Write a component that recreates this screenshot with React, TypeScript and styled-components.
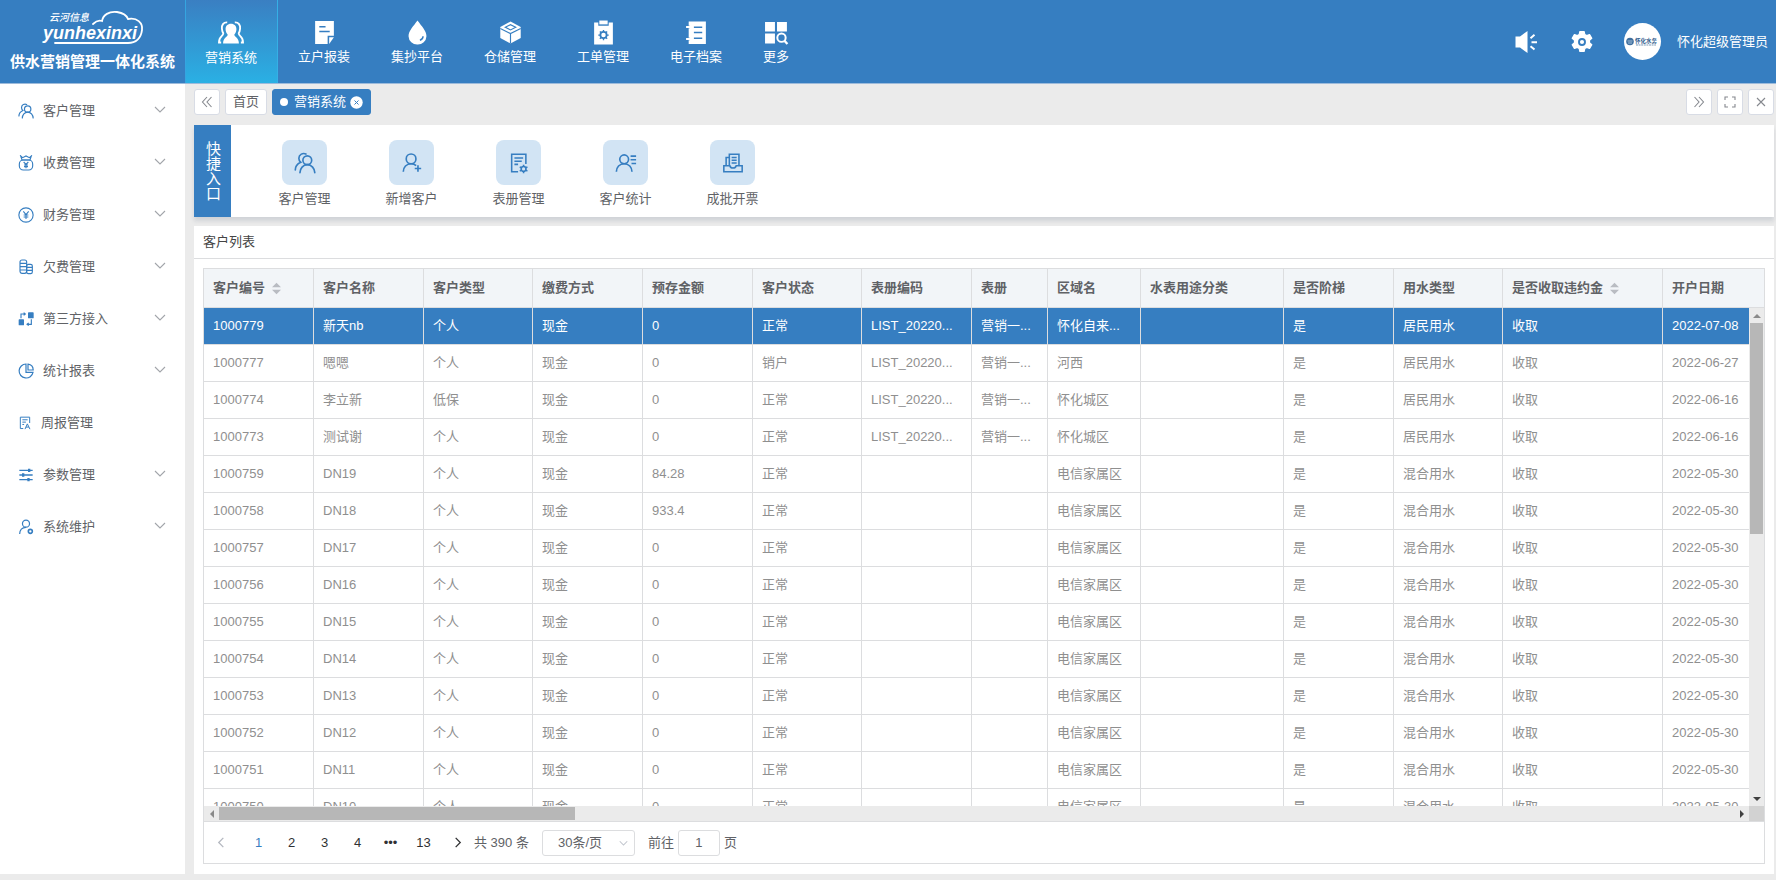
import React, { useState } from "react";
import styled, { createGlobalStyle, css } from "styled-components";

const blue = "#367ec1";
const line = "#dcdddf";
const grey = "#ebebeb";

const GlobalStyle = createGlobalStyle`
  *, *::before, *::after { box-sizing: border-box; }
  body {
    margin: 0;
    background: ${grey};
    color: #606266;
    font: 13px/20px "Liberation Sans", "Noto Sans CJK SC", sans-serif;
  }
  button, input, select { font: inherit; color: inherit; margin: 0; padding: 0; }
  button { cursor: pointer; border: 0; background: none; }
  a { color: inherit; text-decoration: none; }
  ul { list-style: none; margin: 0; padding: 0; }
`;

const Page = styled.div`
  display: flex;
  flex-direction: column;
  height: 100vh;
  min-height: 600px;
`;

/* ---------- header ---------- */
const Header = styled.header`
  display: flex;
  flex: none;
  height: 84px;
  background: ${blue};
  border-bottom: 1px solid #9dbbdb;
  color: #fff;
`;
const Brand = styled.div`
  display: flex;
  flex-direction: column;
  align-items: center;
  gap: 6px;
  width: 185px;
  padding-top: 8px;
`;
const BrandTitle = styled.h1`
  margin: 0;
  font-size: 15px;
  line-height: 20px;
  font-weight: 700;
  white-space: nowrap;
`;
const TopNav = styled.nav`
  display: flex;
`;
const TopLink = styled.a<{ $active?: boolean }>`
  display: flex;
  flex-direction: column;
  align-items: center;
  gap: 2px;
  padding: 20px 20px 0;
  border-right: 1px solid transparent;
  white-space: nowrap;
  ${(p) =>
    p.$active &&
    css`
      background: linear-gradient(#3a7fc2, #2ab0e4);
      border-color: #35b0e6;
      box-shadow: inset 1px 0 #35a5e0;
    `}
`;
const HeaderTools = styled.div`
  display: flex;
  align-items: center;
  margin-left: auto;
  padding-right: 8px;
`;
const ToolButton = styled.button`
  display: flex;
  justify-content: center;
  width: 56px;
  color: #fff;
`;
const UserButton = styled.button`
  display: flex;
  align-items: center;
  gap: 16px;
  margin-left: 14px;
  color: #fff;
  white-space: nowrap;
`;
const Avatar = styled.span`
  display: flex;
  align-items: center;
  justify-content: center;
  width: 37px;
  height: 37px;
  border-radius: 50%;
  background: #fff;
`;

/* ---------- body ---------- */
const Body = styled.div`
  display: flex;
  flex: 1;
  min-height: 0;
  padding-bottom: 6px;
`;
const Sidebar = styled.nav`
  flex: none;
  width: 185px;
  padding-top: 1px;
  background: #fff;
`;
const MenuButton = styled.button`
  display: flex;
  align-items: center;
  width: 100%;
  height: 52px;
  padding: 0 19px 0 18px;
  text-align: left;
`;
const MenuIcon = styled.span<{ $narrow?: boolean }>`
  display: flex;
  width: ${(p) => (p.$narrow ? 23 : 25)}px;
  color: ${blue};
`;
const MenuArrow = styled.span`
  display: flex;
  margin-left: auto;
  padding-bottom: 3px;
  color: #a2a5aa;
`;
const Main = styled.main`
  display: flex;
  flex: 1;
  flex-direction: column;
  min-width: 0;
  padding: 0 2px 0 9px;
`;

const TabBar = styled.div`
  display: flex;
  flex: none;
  gap: 5px;
  height: 41px;
  padding-top: 5px;
`;
const Tab = styled.button<{ $active?: boolean; $square?: boolean }>`
  display: flex;
  align-items: center;
  justify-content: center;
  gap: 4px;
  height: 26px;
  width: ${(p) => (p.$square ? "26px" : "auto")};
  padding: 0 ${(p) => (p.$square ? 0 : 7)}px;
  border: 1px solid ${(p) => (p.$active ? blue : "#d8dce5")};
  border-radius: 3px;
  background: ${(p) => (p.$active ? blue : "#fff")};
  color: ${(p) => (p.$active ? "#fff" : "#606266")};
  white-space: nowrap;
`;
const Dot = styled.span`
  width: 8px;
  height: 8px;
  margin-right: 2px;
  border-radius: 50%;
  background: #fff;
`;
const Spacer = styled.span`
  flex: 1;
`;

const QuickPanel = styled.section`
  display: flex;
  flex: none;
  height: 92px;
  margin-bottom: 9px;
  background: #fff;
  box-shadow: 0 4px 4px rgba(60, 80, 110, 0.15);
`;
const QuickTitle = styled.h2`
  display: flex;
  align-items: center;
  width: 37px;
  margin: 0 20px 0 0;
  padding: 0 10px 0 12px;
  background: ${blue};
  color: #fff;
  font-size: 15px;
  line-height: 15px;
  font-weight: 400;
  word-break: break-all;
`;
const QuickLink = styled.a`
  display: flex;
  flex-direction: column;
  align-items: center;
  gap: 4px;
  width: 107px;
  padding-top: 15px;
`;
const Tile = styled.span`
  display: flex;
  align-items: center;
  justify-content: center;
  width: 45px;
  height: 45px;
  border-radius: 8px;
  background: #d2e4f4;
  color: ${blue};
`;

const ListPanel = styled.section`
  display: flex;
  flex: 1;
  flex-direction: column;
  min-height: 0;
  background: #fff;
`;
const ListTitle = styled.h2`
  flex: none;
  height: 33px;
  margin: 0;
  padding: 0 9px;
  border-bottom: 1px solid ${line};
  color: #444;
  font-size: 13px;
  line-height: 32px;
  font-weight: 400;
`;
const TableBox = styled.div`
  display: flex;
  flex: 1;
  flex-direction: column;
  min-height: 0;
  margin: 9px 9px 10px;
  border: 1px solid ${line};
`;
const TableArea = styled.div`
  display: grid;
  flex: 1;
  grid-template-columns: minmax(0, 1fr) 15px;
  grid-template-rows: minmax(0, 1fr) 15px;
  min-height: 0;
  border-bottom: 1px solid ${line};
`;
const TableView = styled.div`
  overflow: hidden;
`;
const Table = styled.table`
  width: 100%;
  table-layout: fixed;
  border-collapse: separate;
  border-spacing: 0;
`;
const Th = styled.th`
  height: 39px;
  padding: 0 9px;
  border-right: 1px solid ${line};
  border-bottom: 1px solid ${line};
  background: #f2f5f8;
  color: #606266;
  font-weight: 700;
  text-align: left;
  white-space: nowrap;
  &:last-child { border-right: 0; }
`;
const HeadLabel = styled.span`
  display: flex;
  align-items: center;
  gap: 7px;
`;
const SortButton = styled.button`
  display: flex;
  color: #b9bcc2;
`;
const Td = styled.td`
  height: 37px;
  padding: 0 0 0 9px;
  border-right: 1px solid ${line};
  border-bottom: 1px solid ${line};
  overflow: hidden;
  white-space: nowrap;
  &:last-child { border-right: 0; }
`;
const Row = styled.tr<{ $selected?: boolean }>`
  color: ${(p) => (p.$selected ? "#fff" : "#8f8f8f")};
  background: ${(p) => (p.$selected ? blue : "#fff")};
`;
const VScroll = styled.div`
  display: flex;
  flex-direction: column;
  min-height: 0;
  background: ${grey};
`;
const VHead = styled.div`
  height: 39px;
  border-bottom: 1px solid ${line};
  background: #f2f5f8;
`;
const HScroll = styled.div`
  display: flex;
  background: ${grey};
`;
const ScrollArrow = styled.span<{ $dim?: boolean }>`
  display: flex;
  flex: none;
  align-items: center;
  justify-content: center;
  width: 15px;
  height: 15px;
  color: ${(p) => (p.$dim ? "#8a8a8a" : "#404040")};
`;
const VTrack = styled.div`
  flex: 1;
  padding: 0 1px;
`;
const VThumb = styled.div`
  height: 45%;
  background: #b7b7b7;
`;
const HTrack = styled.div`
  flex: 1;
  padding: 1px 0;
`;
const HThumb = styled.div`
  width: 23.5%;
  height: 100%;
  background: #b7b7b7;
`;
const Corner = styled.div`
  background: #d2d2d2;
`;

const Pager = styled.nav`
  display: flex;
  flex: none;
  align-items: center;
  height: 41px;
  color: #606266;
  white-space: nowrap;
`;
const PagerArrow = styled.button<{ $dim?: boolean }>`
  display: flex;
  justify-content: center;
  width: 34px;
  color: ${(p) => (p.$dim ? "#b4b8c0" : "#303133")};
`;
const PageList = styled.ul`
  display: flex;
  margin-left: 4px;
`;
const PageButton = styled.button<{ $active?: boolean }>`
  width: 33px;
  color: ${(p) => (p.$active ? blue : "#303133")};
  text-align: center;
`;
const SizeBox = styled.label`
  position: relative;
  display: flex;
  margin: 0 13px;
`;
const SizeSelect = styled.select`
  appearance: none;
  width: 93px;
  height: 26px;
  padding: 0 28px 0 15px;
  border: 1px solid ${line};
  border-radius: 3px;
  background: #fff;
`;
const SizeArrow = styled.span`
  position: absolute;
  top: 9px;
  right: 7px;
  display: flex;
  color: #c0c4cc;
  pointer-events: none;
`;
const JumpLabel = styled.label`
  display: flex;
  align-items: center;
  gap: 4px;
`;
const JumpInput = styled.input`
  width: 42px;
  height: 26px;
  border: 1px solid ${line};
  border-radius: 3px;
  background: #fff;
  text-align: center;
`;

/* ---------- icons ---------- */
const Svg = ({ s = 25, box = 24, children }: { s?: number; box?: number; children: React.ReactNode }) => (
  <svg width={s} height={s} viewBox={`0 0 ${box} ${box}`} fill="none" stroke="currentColor" aria-hidden="true">
    {children}
  </svg>
);

const Chevron = ({ w = 10, dir = "down", weight = 1.4 }: { w?: number; dir?: "down" | "left" | "right"; weight?: number }) => {
  const d = { down: "M1 3l5 5 5-5", left: "M8 1L3 6l5 5", right: "M4 1l5 5-5 5" }[dir];
  return (
    <svg width={w} height={w} viewBox="0 0 12 12" fill="none" stroke="currentColor" strokeWidth={weight} aria-hidden="true">
      <path d={d} />
    </svg>
  );
};

const Triangle = ({ d }: { d: string }) => (
  <svg width="8" height="8" viewBox="0 0 8 8" fill="currentColor" aria-hidden="true">
    <path d={d} />
  </svg>
);

const SortIcon = () => (
  <svg width="9" height="13" viewBox="0 0 10 13" fill="currentColor" aria-hidden="true">
    <path d="M5 0l5 5H0zM5 13L0 8h10z" />
  </svg>
);

const Logo = () => (
  <svg width="106" height="38" viewBox="40 8 106 38" fill="none" stroke="none" role="img" aria-label="yunhexinxi">
    <path
      d="M93 24c3-3 6-4 9-3 1-6 7-10 15-9 6 1 10 4 11 7 9-2 15 4 14 11-1 8-6 13-14 13H55"
      stroke="#fff"
      strokeWidth="1.8"
      strokeLinecap="round"
    />
    <text x="49" y="21" fontSize="10" fontStyle="italic" fontWeight="500" fill="#fff" fontFamily="'Noto Sans CJK SC', sans-serif">
      云河信息
    </text>
    <text x="43" y="39" fontSize="18" fontStyle="italic" fontWeight="700" fill="#fff" fontFamily="'Liberation Sans', sans-serif">
      yunhexinxi
    </text>
  </svg>
);

const gearPath =
  "M9.8 1.5h4.4l.6 3 1.9 1.1 2.9-1 2.2 3.8-2.3 2v2.2l2.3 2-2.2 3.8-2.9-1-1.9 1.1-.6 3H9.8l-.6-3-1.9-1.1-2.9 1-2.2-3.8 2.3-2v-2.2l-2.3-2 2.2-3.8 2.9 1 1.9-1.1z";

const SolidUsers = () => (
  <Svg s={26}>
    <path
      d="M8.500 2.200C5 2 3.200 4.600 3.600 8c.2 2.200.6 3.200 1.300 4.300C4.800 15.500.9 14.500.9 20.800h2M15.500 2.200c3.500-.2 5.300 2.400 4.900 5.800-.2 2.200-.6 3.200-1.300 4.300.1 3.200 4 2.200 4 8.500h-2"
      strokeWidth="1.700"
    />
    <path
      d="M12 3.400c3.200 0 5 2.100 5 5 0 2.200-.8 4-2 5.300.3 2.200 4.300 2.500 4.300 8H4.700c0-5.500 4-5.800 4.300-8C7.800 12.400 7 10.600 7 8.400c0-2.900 1.800-5 5-5z"
      fill="currentColor"
      stroke="none"
    />
  </Svg>
);
const SolidNote = () => (
  <Svg>
    <path d="M3 1h18v14h-6v8H3z" fill="currentColor" stroke="none" />
    <path d="M21 16.500L16.500 23v-6.500z" fill="currentColor" stroke="none" />
    <path d="M7 6.500h6M7 11h10" stroke={blue} strokeWidth="1.400" />
  </Svg>
);
const SolidDrop = () => (
  <Svg>
    <path d="M12 .5c4 5.500 8.600 10 8.600 15A8.300 8.300 0 0 1 12 23.500 8.300 8.300 0 0 1 3.400 15.500C3.400 10.500 8 6 12 .5z" fill="currentColor" stroke="none" />
    <path d="M17.300 15.500c0 2-1.300 3.400-3 3.900" stroke={blue} strokeWidth="1.400" />
  </Svg>
);
const SolidBox = () => (
  <Svg>
    <path d="M12 1.500l9.800 5.200v10.600L12 22.500l-9.800-5.200V6.700z" fill="currentColor" stroke="none" />
    <path d="M2.200 8.200L12 13l9.800-4.800M12 13v9.500M7 7l5-2.500L17 7l-5 2.500z" stroke={blue} strokeWidth="1.100" />
  </Svg>
);
const SolidClipboard = () => (
  <Svg>
    <path d="M3 2.500h4V5.500h10v-3h4V23.500H3z" fill="currentColor" stroke="none" />
    <path d="M8 .5h8v3.700H8z" fill="currentColor" stroke="none" />
    <circle cx="12" cy="14.500" r="3" stroke={blue} strokeWidth="1.700" />
    <path d="M12 9.500v2M12 17.500v2M7 14.500h2M15 14.500h2M8.500 11l1.300 1.300M14.200 16.700l1.300 1.300M15.500 11l-1.300 1.300M9.800 16.700L8.500 18" stroke={blue} strokeWidth="1.300" />
  </Svg>
);
const SolidBook = () => (
  <Svg>
    <path d="M4.500 1.500H21V23H4.500v-3.500h1V17h-1V8h1V5.500h-1z" fill="currentColor" stroke="none" />
    <path d="M2 6.700h4M2 18.300h4" strokeWidth="2" />
    <path d="M9.500 7h8M9.500 12h8M9.500 17.500h8" stroke={blue} strokeWidth="1.300" />
  </Svg>
);
const SolidGrid = () => (
  <Svg>
    <path d="M1 2h9.500v9H1zM12.500 2H22v9h-9.500zM1 13h9.500v9.500H1z" fill="currentColor" stroke="none" />
    <circle cx="16.800" cy="17" r="4" strokeWidth="1.900" />
    <path d="M19.500 19.800l3 3.200" strokeWidth="2.200" />
  </Svg>
);
const Speaker = () => (
  <Svg s={24}>
    <path d="M1.500 6.500H6l7.500-5.500v22L6 17.500H1.500z" fill="currentColor" stroke="none" />
    <path d="M16.500 8.200l4-3.400M17.500 12.300H23M16.500 16.200l4 3.400" strokeWidth="2" />
  </Svg>
);
const Gear = () => (
  <Svg s={24}>
    <path d={gearPath} fill="currentColor" strokeWidth="1.200" strokeLinejoin="round" />
    <circle cx="12" cy="12" r="3" stroke={blue} strokeWidth="1.900" />
  </Svg>
);
const AvatarLogo = () => (
  <svg width="32" height="11" viewBox="0 0 32 11" aria-hidden="true">
    <circle cx="4" cy="5.500" r="3.800" fill="#3f6f9f" />
    <path d="M1.500 5h5M2 7h4" stroke="#b9cfe2" strokeWidth=".8" />
    <text x="9" y="6.500" fontSize="5.500" fontWeight="700" fill="#33618f" fontFamily="'Noto Sans CJK SC', sans-serif">
      怀化水务
    </text>
    <path d="M10 9h20" stroke="#7d9bb8" strokeWidth="1" strokeDasharray="2 .6" />
  </svg>
);

const UsersLine = ({ s = 16 }: { s?: number }) => (
  <Svg s={s}>
    <g strokeWidth="1.800" strokeLinecap="round">
      <circle cx="14.500" cy="9" r="4.800" />
      <path d="M6.500 22.500c.2-4.500 3.300-8.700 8-8.700s8 4.200 8.200 8.700" />
      <path d="M13 2.200C9.800.6 5.300 2.600 5.300 6.800c0 2 .8 3.500 2 4.400C3.500 13 1.400 16 1.400 19.500" />
    </g>
  </Svg>
);
const MoneyBag = () => (
  <Svg s={16}>
    <g strokeWidth="1.700">
      <path d="M4 1.500l3 2.500 5-2.500L17 4l3-2.500-2 6H6z" />
      <rect x="2" y="7.500" width="20" height="15" rx="6" />
      <path d="M8.500 10.500L12 14l3.500-3.500M12 14v6M9 15h6M9 17.500h6" />
    </g>
  </Svg>
);
const YenCircle = () => (
  <Svg s={16}>
    <circle cx="12" cy="12" r="10.700" strokeWidth="1.700" />
    <path d="M8 6.500l4 5 4-5M12 11.500V18M8.500 12h7M8.500 15h7" strokeWidth="1.600" />
  </Svg>
);
const Coins = () => (
  <Svg s={16}>
    <g strokeWidth="1.700">
      <rect x="3" y="1.500" width="10" height="20" rx="3" />
      <path d="M3 6.500h10M3 11.500h10M3 16.500h10" />
      <rect x="13" y="8" width="8.500" height="14" rx="2.500" />
      <path d="M13 12.500h8.500M13 17h8.500" />
    </g>
  </Svg>
);
const Connect = () => (
  <Svg s={16}>
    <rect x="1" y="12.500" width="8" height="9" rx="1" fill="currentColor" stroke="none" />
    <rect x="15" y="2" width="8.500" height="9" rx="1" fill="currentColor" stroke="none" />
    <path d="M4.500 11V4.500H10M8.500 2.500l2.500 2-2.500 2M20 12.500v7.500h-5.500M16 17.800l-2.500 2.200 2.500 2" strokeWidth="1.700" />
  </Svg>
);
const Pie = () => (
  <Svg s={16}>
    <g strokeWidth="1.800">
      <path d="M12 1.500A10.500 10.500 0 1 0 22.500 14H12z" />
      <path d="M15 1.800a9 9 0 0 1 7.800 8.700H15z" />
    </g>
  </Svg>
);
const Weekly = () => (
  <Svg s={14}>
    <g strokeWidth="1.700">
      <path d="M9 21.500H4V2h16v10M7.500 6.500h9M7.500 10.500h6M7.500 14.500h3" />
      <path d="M12 22.500l4-9 4.500 9M13.500 19h5" />
    </g>
  </Svg>
);
const Sliders = () => (
  <Svg s={16}>
    <path d="M2 5h20M2 12h20M2 19h20" strokeWidth="2" />
    <path d="M15 2.500h3.500v5H15zM6 9.500h3.500v5H6zM14 16.500h3.500v5H14z" fill="currentColor" stroke="none" />
  </Svg>
);
const UserCog = () => (
  <Svg s={16}>
    <circle cx="12" cy="7" r="5.300" strokeWidth="1.800" />
    <path d="M2.500 22.500c0-6 3.500-10 9.500-10" strokeWidth="1.800" />
    <circle cx="18.500" cy="18.500" r="3" strokeWidth="2.400" />
  </Svg>
);
const UserPlus = () => (
  <Svg s={22}>
    <g strokeWidth="1.800">
      <circle cx="11" cy="7.500" r="5.300" />
      <path d="M2.500 21.500c0-5 3.500-8.700 8.500-8.700 2.500 0 4.300.8 5.500 2M18.500 14.500v7M15 18h7" />
    </g>
  </Svg>
);
const FormCog = () => (
  <Svg s={22}>
    <g strokeWidth="1.700">
      <path d="M11 21.500H4v-19h15.500V13M7 6.500h9.500M7 10h8M7 13.500h4" />
      <circle cx="17" cy="18.500" r="2.600" />
      <path d="M17 13.800v2.200M17 21v2.200M12.800 16.200l1.800 1M19.400 19.800l1.800 1M12.800 20.800l1.800-1M19.400 17.200l1.800-1" />
    </g>
  </Svg>
);
const UserStats = () => (
  <Svg s={22}>
    <g strokeWidth="1.800">
      <circle cx="10" cy="8" r="4.800" />
      <path d="M1.500 21.500c0-5 3.500-8.700 8.500-8.700s8.500 3.700 8.500 8.700M17 4.500h6M17 8.500h6M18 12.500h5" />
    </g>
  </Svg>
);
const Invoices = () => (
  <Svg s={22}>
    <g strokeWidth="1.700">
      <path d="M8 15V2.500h10.500V15M8 6H4.500v9M10.500 6h5.500M10.500 9h5.500M10.500 12h5.500" />
      <path d="M2 15h6.500c.5 2 2 2.500 3.500 2.500s3-.5 3.500-2.500H22v6.500H2z" />
    </g>
  </Svg>
);
const CloseCircle = () => (
  <svg width="13" height="13" viewBox="0 0 13 13" aria-hidden="true">
    <circle cx="6.500" cy="6.500" r="6.200" fill="#fff" />
    <path d="M4.500 4.500l4 4M8.500 4.500l-4 4" stroke={blue} strokeWidth="1" />
  </svg>
);
const Thin = ({ d }: { d: string }) => (
  <svg width="12" height="12" viewBox="0 0 12 12" fill="none" stroke="#85888e" strokeWidth="1.100" aria-hidden="true">
    <path d={d} />
  </svg>
);

/* ---------- data ---------- */
const topItems = [
  { label: "营销系统", icon: <SolidUsers /> },
  { label: "立户报装", icon: <SolidNote /> },
  { label: "集抄平台", icon: <SolidDrop /> },
  { label: "仓储管理", icon: <SolidBox /> },
  { label: "工单管理", icon: <SolidClipboard /> },
  { label: "电子档案", icon: <SolidBook /> },
  { label: "更多", icon: <SolidGrid /> },
];

const menu = [
  { label: "客户管理", icon: <UsersLine /> },
  { label: "收费管理", icon: <MoneyBag /> },
  { label: "财务管理", icon: <YenCircle /> },
  { label: "欠费管理", icon: <Coins /> },
  { label: "第三方接入", icon: <Connect /> },
  { label: "统计报表", icon: <Pie /> },
  { label: "周报管理", icon: <Weekly />, leaf: true },
  { label: "参数管理", icon: <Sliders /> },
  { label: "系统维护", icon: <UserCog /> },
];

const quick = [
  { label: "客户管理", icon: <UsersLine s={22} /> },
  { label: "新增客户", icon: <UserPlus /> },
  { label: "表册管理", icon: <FormCog /> },
  { label: "客户统计", icon: <UserStats /> },
  { label: "成批开票", icon: <Invoices /> },
];

const columns: { label: string; width?: number; sortable?: boolean }[] = [
  { label: "客户编号", width: 110, sortable: true },
  { label: "客户名称", width: 110 },
  { label: "客户类型", width: 109 },
  { label: "缴费方式", width: 110 },
  { label: "预存金额", width: 110 },
  { label: "客户状态", width: 109 },
  { label: "表册编码", width: 110 },
  { label: "表册", width: 76 },
  { label: "区域名", width: 93 },
  { label: "水表用途分类", width: 143 },
  { label: "是否阶梯", width: 110 },
  { label: "用水类型", width: 109 },
  { label: "是否收取违约金", width: 160, sortable: true },
  { label: "开户日期" },
];

const book = ["LIST_20220...", "营销一..."];
const plain = (id: number, name: string, amount = "0") => [
  String(id), name, "个人", "现金", amount, "正常", "", "", "电信家属区", "", "是", "混合用水", "收取", "2022-05-30",
];
const rows: string[][] = [
  ["1000779", "新天nb", "个人", "现金", "0", "正常", ...book, "怀化自来...", "", "是", "居民用水", "收取", "2022-07-08"],
  ["1000777", "嗯嗯", "个人", "现金", "0", "销户", ...book, "河西", "", "是", "居民用水", "收取", "2022-06-27"],
  ["1000774", "李立新", "低保", "现金", "0", "正常", ...book, "怀化城区", "", "是", "居民用水", "收取", "2022-06-16"],
  ["1000773", "测试谢", "个人", "现金", "0", "正常", ...book, "怀化城区", "", "是", "居民用水", "收取", "2022-06-16"],
  plain(1000759, "DN19", "84.28"),
  plain(1000758, "DN18", "933.4"),
  plain(1000757, "DN17"),
  plain(1000756, "DN16"),
  plain(1000755, "DN15"),
  plain(1000754, "DN14"),
  plain(1000753, "DN13"),
  plain(1000752, "DN12"),
  plain(1000751, "DN11"),
  plain(1000750, "DN10"),
];

export default function App() {
  const [selected, setSelected] = useState("1000779");
  const [page, setPage] = useState("1");

  return (
    <Page>
      <GlobalStyle />
      <Header>
        <Brand>
          <Logo />
          <BrandTitle>供水营销管理一体化系统</BrandTitle>
        </Brand>
        <TopNav aria-label="系统">
          {topItems.map((t, i) => (
            <TopLink key={t.label} href="#" $active={i === 0}>
              {t.icon}
              {t.label}
            </TopLink>
          ))}
        </TopNav>
        <HeaderTools>
          <ToolButton aria-label="公告"><Speaker /></ToolButton>
          <ToolButton aria-label="设置"><Gear /></ToolButton>
          <UserButton>
            <Avatar><AvatarLogo /></Avatar>
            怀化超级管理员
          </UserButton>
        </HeaderTools>
      </Header>

      <Body>
        <Sidebar aria-label="菜单">
          <ul>
            {menu.map((m) => (
              <li key={m.label}>
                <MenuButton>
                  <MenuIcon $narrow={m.leaf}>{m.icon}</MenuIcon>
                  {m.label}
                  {!m.leaf && <MenuArrow><Chevron w={12} weight={1.1} /></MenuArrow>}
                </MenuButton>
              </li>
            ))}
          </ul>
        </Sidebar>

        <Main>
          <TabBar>
            <Tab $square aria-label="向左"><Thin d="M6 1L1.500 6 6 11M10.500 1L6 6l4.500 5" /></Tab>
            <Tab>首页</Tab>
            <Tab $active>
              <Dot />
              营销系统
              <CloseCircle />
            </Tab>
            <Spacer />
            <Tab $square aria-label="向右"><Thin d="M1.500 1L6 6l-4.500 5M6 1l4.500 5L6 11" /></Tab>
            <Tab $square aria-label="全屏"><Thin d="M1 4V1h3M8 1h3v3M11 8v3H8M4 11H1V8" /></Tab>
            <Tab $square aria-label="关闭"><Thin d="M2 2l8 8M10 2l-8 8" /></Tab>
          </TabBar>

          <QuickPanel>
            <QuickTitle>快捷入口</QuickTitle>
            {quick.map((q) => (
              <QuickLink key={q.label} href="#">
                <Tile>{q.icon}</Tile>
                {q.label}
              </QuickLink>
            ))}
          </QuickPanel>

          <ListPanel>
            <ListTitle>客户列表</ListTitle>
            <TableBox>
              <TableArea>
                <TableView>
                  <Table>
                    <colgroup>
                      {columns.map((c) => (
                        <col key={c.label} width={c.width} />
                      ))}
                    </colgroup>
                    <thead>
                      <tr>
                        {columns.map((c) => (
                          <Th key={c.label} scope="col">
                            <HeadLabel>
                              {c.label}
                              {c.sortable && (
                                <SortButton aria-label="排序"><SortIcon /></SortButton>
                              )}
                            </HeadLabel>
                          </Th>
                        ))}
                      </tr>
                    </thead>
                    <tbody>
                      {rows.map((r) => (
                        <Row key={r[0]} $selected={r[0] === selected} onClick={() => setSelected(r[0])}>
                          {r.map((cell, i) => (
                            <Td key={i}>{cell}</Td>
                          ))}
                        </Row>
                      ))}
                    </tbody>
                  </Table>
                </TableView>
                <VScroll>
                  <VHead />
                  <ScrollArrow $dim><Triangle d="M4 2l4 4H0z" /></ScrollArrow>
                  <VTrack><VThumb /></VTrack>
                  <ScrollArrow><Triangle d="M4 6L0 2h8z" /></ScrollArrow>
                </VScroll>
                <HScroll>
                  <ScrollArrow $dim><Triangle d="M2 4l4-4v8z" /></ScrollArrow>
                  <HTrack><HThumb /></HTrack>
                  <ScrollArrow><Triangle d="M6 4L2 8V0z" /></ScrollArrow>
                </HScroll>
                <Corner />
              </TableArea>
              <Pager aria-label="分页">
                <PagerArrow $dim aria-label="上一页"><Chevron w={11} dir="left" /></PagerArrow>
                <PageList>
                  {["1", "2", "3", "4", "•••", "13"].map((p) => (
                    <li key={p}>
                      <PageButton $active={p === "1"}>{p}</PageButton>
                    </li>
                  ))}
                </PageList>
                <PagerArrow aria-label="下一页"><Chevron w={11} dir="right" /></PagerArrow>
                <span>共 390 条</span>
                <SizeBox>
                  <SizeSelect aria-label="每页条数" defaultValue="30">
                    <option value="30">30条/页</option>
                    <option value="50">50条/页</option>
                  </SizeSelect>
                  <SizeArrow><Chevron w={9} /></SizeArrow>
                </SizeBox>
                <JumpLabel>
                  前往
                  <JumpInput value={page} onChange={(e) => setPage(e.target.value)} />
                  页
                </JumpLabel>
              </Pager>
            </TableBox>
          </ListPanel>
        </Main>
      </Body>
    </Page>
  );
}
